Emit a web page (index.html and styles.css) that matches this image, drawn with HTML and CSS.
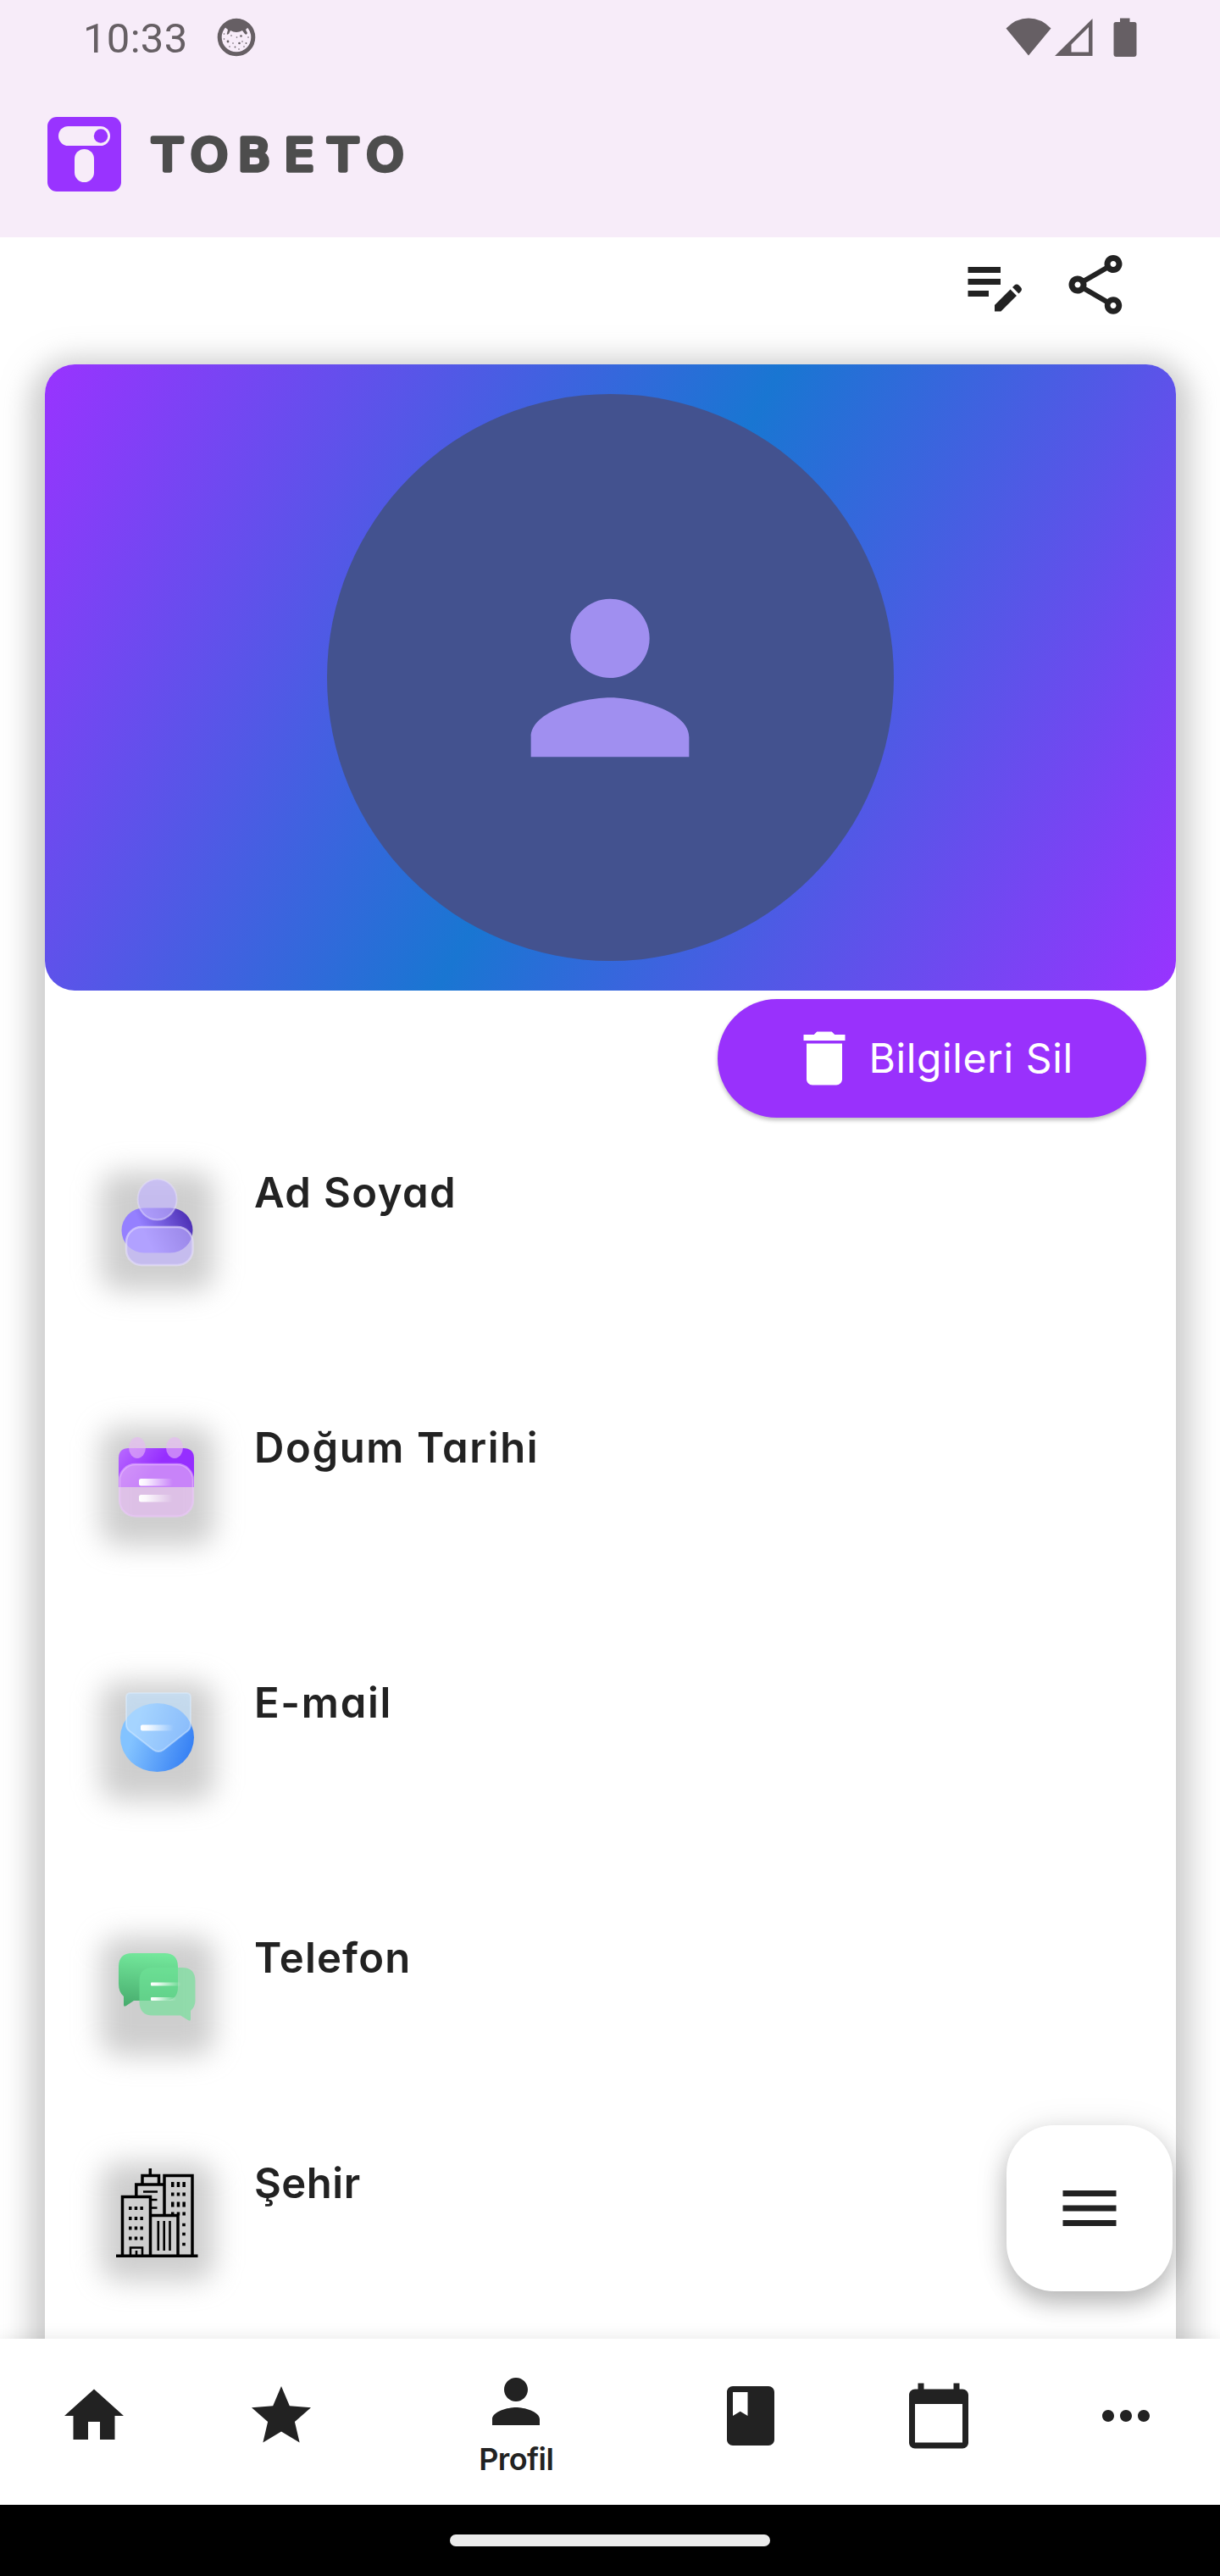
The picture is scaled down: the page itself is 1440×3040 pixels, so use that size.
FILE: index.html
```html
<!DOCTYPE html>
<html lang="tr">
<head>
<meta charset="utf-8">
<title>Tobeto - Profil</title>
<link rel="stylesheet" href="styles.css">
</head>
<body>
<div class="screen">
  <header class="header">
    <div class="status">
      <span class="clock">10:33</span>
      <svg class="face" width="46" height="46" viewBox="0 0 46 46">
        <circle cx="23" cy="23" r="19.8" fill="none" stroke="#665f64" stroke-width="5"/>
        <path fill="#665f64" d="M8 10Q15 1 23 1T38 10L34 14L36 18Q35 21 33 19L30 15Q23 19 16 15L14 19Q11 21 12 18L13 14Z"/>
        <g fill="#665f64"><circle cx="13" cy="28" r="1.4"/><circle cx="26.500" cy="30" r="1.3"/><circle cx="28.500" cy="21.500" r="1.3"/><circle cx="17" cy="21" r=".8"/><circle cx="23.500" cy="23" r=".8"/><circle cx="19" cy="30" r=".8"/><circle cx="30" cy="28" r=".8"/><circle cx="34.500" cy="30" r=".9"/><circle cx="8.500" cy="25" r=".8"/><circle cx="8.500" cy="19" r=".8"/><circle cx="37" cy="23" r=".8"/><circle cx="15" cy="34" r=".8"/><circle cx="21.500" cy="34.500" r=".9"/><circle cx="26" cy="37" r=".8"/><circle cx="32" cy="34" r=".8"/></g>
      </svg>
      <svg class="signals" width="156" height="48" viewBox="0 0 156 48" fill="#665f64">
        <path d="M.5 13.500Q12 1.500 27 1.500T53.500 13.500L27 45.500Z"/>
        <path fill-rule="evenodd" d="M58 46L102.500 2V46ZM77.500 41.500H98V12L77.500 32.500Z"/>
        <path d="M135 1.500h11.500v4.500H152q2.500 0 2.500 2.500V44q0 3-3 3H130.500q-3 0-3-3V8.500Q127.500 6 130 6h5z"/>
      </svg>
    </div>
    <svg class="brand" width="424" height="90" viewBox="0 0 424 90">
      <rect y="1" width="87" height="88" rx="11" fill="#9933ff"/>
      <rect x="13" y="12" width="61" height="23" rx="11.500" fill="#f7ecf9"/>
      <circle cx="63" cy="23.500" r="8.200" fill="#9933ff"/>
      <rect x="32" y="39" width="23" height="39" rx="11.500" fill="#f7ecf9"/>
      <text class="wordmark" transform="scale(1.06 1)" x="133.500 180.200 230.200 280.200 329.200 375.900" y="63.700">TOBETO</text>
    </svg>
  </header>

  <main class="content">
    <div class="actions">
      <svg class="icon" viewBox="0 0 24 24"><path d="M3 10h11v2H3v-2zm0-2h11V6H3v2zm0 8h7v-2H3v2zm15.010-3.130.710-.710c.390-.390 1.020-.390 1.410 0l.710.710c.390.390.390 1.020 0 1.410l-.710.710-2.120-2.120zm-.710.710-5.300 5.300V21h2.120l5.300-5.300-2.120-2.120z"/></svg>
      <svg class="icon" viewBox="0 0 24 24"><path d="M18 16.080c-.760 0-1.440.300-1.960.770L8.910 12.700c.050-.230.090-.460.090-.700s-.040-.470-.090-.700l7.050-4.110c.540.500 1.250.810 2.040.810 1.660 0 3-1.340 3-3s-1.340-3-3-3-3 1.340-3 3c0 .240.040.470.090.700L8.040 9.810C7.500 9.310 6.790 9 6 9c-1.660 0-3 1.340-3 3s1.340 3 3 3c.790 0 1.500-.310 2.040-.810l7.120 4.160c-.050.210-.080.430-.080.650 0 1.610 1.310 2.920 2.920 2.920s2.920-1.310 2.920-2.920c0-1.610-1.310-2.920-2.920-2.920zM18 4c.550 0 1 .450 1 1s-.450 1-1 1-1-.450-1-1 .450-1 1-1zM6 13c-.550 0-1-.450-1-1s.450-1 1-1 1 .450 1 1-.450 1-1 1zm12 7.020c-.550 0-1-.450-1-1s.450-1 1-1 1 .450 1 1-.450 1-1 1z"/></svg>
    </div>

    <section class="card">
      <div class="banner">
        <div class="avatar">
          <svg width="280" height="280" viewBox="0 0 24 24" fill="#a08ff0"><path d="M12 12c2.210 0 4-1.790 4-4s-1.790-4-4-4-4 1.790-4 4 1.790 4 4 4zm0 2c-2.670 0-8 1.340-8 4v2h16v-2c0-2.660-5.330-4-8-4z"/></svg>
        </div>
      </div>
      <div class="toolbar">
        <button class="delete">
          <svg class="icon" viewBox="0 0 24 24"><path d="M6 19c0 1.100.900 2 2 2h8c1.100 0 2-.900 2-2V7H6v12zM19 4h-3.500l-1-1h-5l-1 1H5v2h14V4z"/></svg>
          <span class="delete-label">Bilgileri Sil</span>
        </button>
      </div>

      <ul class="fields">
        <li class="field">
          <span class="thumb"><svg viewBox="0 0 99 105">
            <defs>
              <linearGradient id="body" x1="0" y1=".4" x2="1" y2=".1"><stop offset=".25" stop-color="#9580ff"/><stop offset="1" stop-color="#4527ad"/></linearGradient>
              <linearGradient id="fade"><stop offset="0" stop-color="#fff"/><stop offset=".2" stop-color="#fff" stop-opacity=".9"/><stop offset="1" stop-color="#fff" stop-opacity="0"/></linearGradient>
            </defs>
            <rect x="7.500" y="35.500" width="84" height="53" rx="26.500" fill="url(#body)"/>
            <ellipse cx="49.600" cy="25.500" rx="23" ry="24" fill="#c0b2ff" fill-opacity=".65" stroke="#e6e0fc" stroke-opacity=".5" stroke-width="2"/>
            <rect x="13" y="58" width="78.500" height="45" rx="18" fill="#c0b2ff" fill-opacity=".65" stroke="#e6e0fc" stroke-opacity=".6" stroke-width="2.500"/>
          </svg></span>
          <span class="label name">Ad Soyad</span>
        </li>
        <li class="field">
          <span class="thumb"><svg viewBox="0 0 99 105">
            <defs><linearGradient id="cal" x1="0" y1="0" x2="1" y2=".4"><stop offset="0" stop-color="#b96bff"/><stop offset=".6" stop-color="#962eff"/><stop offset="1" stop-color="#962eff"/></linearGradient></defs>
            <path d="M4 64V30Q4 18 16 18H80Q93 18 93 30V64Z" fill="url(#cal)"/>
            <g fill="#e7b8f5" fill-opacity=".62"><ellipse cx="26" cy="17.500" rx="10" ry="12.500"/><ellipse cx="70" cy="17.500" rx="10" ry="12.500"/></g>
            <rect x="5" y="37" width="87" height="61.500" rx="19" fill="#e7b8f5" fill-opacity=".62" stroke="#f0c8ff" stroke-opacity=".5" stroke-width="2.500"/>
            <rect x="28" y="54" width="40" height="8.500" rx="2.500" fill="url(#fade)"/>
            <rect x="28" y="73" width="40" height="8.500" rx="2.500" fill="url(#fade)"/>
          </svg></span>
          <span class="label birth">Doğum Tarihi</span>
        </li>
        <li class="field">
          <span class="thumb"><svg viewBox="0 0 99 105">
            <defs><linearGradient id="mail" x1="0" y1=".3" x2="1" y2=".6"><stop offset=".2" stop-color="#83c3ff"/><stop offset="1" stop-color="#3680f4"/></linearGradient></defs>
            <ellipse cx="49.500" cy="58.500" rx="43.500" ry="40.500" fill="url(#mail)"/>
            <path d="M13 11Q13 6 18 6H84Q89 6 89 11V43Q89 48 85 51L57 73Q51 77 45 73L17 51Q13 48 13 43Z" fill="#bde0ff" fill-opacity=".6" stroke="#dceeff" stroke-opacity=".5" stroke-width="2"/>
            <rect x="30" y="43.500" width="39" height="7" rx="2" fill="url(#fade)"/>
          </svg></span>
          <span class="label email">E-mail</span>
        </li>
        <li class="field short">
          <span class="thumb"><svg viewBox="0 0 99 105">
            <defs><linearGradient id="chat" x1=".4" y1="0" x2=".3" y2="1"><stop offset="0" stop-color="#73e79b"/><stop offset="1" stop-color="#48ad6e"/></linearGradient></defs>
            <path d="M20 12H58Q74 12 74 28V52Q74 68 58 68H22L13 74Q10 76 10 73V63Q4 58 4 48V28Q4 12 20 12Z" fill="url(#chat)"/>
            <path d="M44 29H79Q94.500 29 94.500 45V68Q94.500 75 89 80V90Q89 93 86 91L77 85.500H44Q28.500 85.500 28.500 69V45Q28.500 29 44 29Z" fill="#6ee296" fill-opacity=".64"/>
            <rect x="42" y="46.500" width="36" height="4" rx="1" fill="url(#fade)"/>
            <rect x="42" y="64" width="30" height="4" rx="1" fill="url(#fade)"/>
          </svg></span>
          <span class="label phone">Telefon</span>
        </li>
        <li class="field">
          <span class="thumb"><svg viewBox="0 0 99 105" fill="none" stroke="#000" stroke-width="3.500">
            <path d="M1 103.300H97.500M8.500 103V33.500H41.500V103M24.800 33V19H57M32 18V8.500H51.500V18M41.300 0V8M58 55V8.500H91V103M43 55.500H74V103"/>
            <path stroke-width="2.600" d="M33 27.500H50M43 37H49.500M43 46.500H49.500M50.800 62V97M57.700 62V97M64.500 62V97M18 103V93.500H32V103M25 97V103"/>
            <g stroke-width="4" stroke-dasharray="3.500 3.200"><path d="M16 47H36M16 59H36M16 70.500H36M16 82.500H36"/></g>
            <g stroke-width="6" stroke-dasharray="3.500 3.200"><path d="M66 19H84M66 42.500H84"/></g>
            <g stroke-width="4" stroke-dasharray="3.500 3.200"><path d="M66 30.500H84M66 53.500H84"/></g>
            <path d="M79.200 66.500h3.600M79.200 77.500h3.600M79.200 89.500h3.600"/>
          </svg></span>
          <span class="label city">Şehir</span>
        </li>
      </ul>
    </section>

    <button class="fab" aria-label="Menü"><svg class="icon" viewBox="0 0 24 24"><path d="M3 18h18v-2H3v2zm0-5h18v-2H3v2zm0-7v2h18V6H3z"/></svg></button>
  </main>

  <nav class="nav">
    <a class="tab"><svg class="icon" viewBox="0 0 24 24"><path d="M10 20v-6h4v6h5v-8h3L12 3 2 12h3v8z"/></svg></a>
    <a class="tab"><svg class="icon" viewBox="0 0 24 24"><path d="M12 17.270L18.180 21l-1.640-7.030L22 9.240l-7.190-.610L12 2 9.190 8.630 2 9.240l5.460 4.730L5.820 21z"/></svg></a>
    <a class="tab active"><svg class="icon" viewBox="0 0 24 24"><path d="M12 12c2.210 0 4-1.790 4-4s-1.790-4-4-4-4 1.790-4 4 1.790 4 4 4zm0 2c-2.670 0-8 1.340-8 4v2h16v-2c0-2.660-5.330-4-8-4z"/></svg><span class="tab-label">Profil</span></a>
    <a class="tab"><svg class="icon" viewBox="0 0 24 24"><path d="M18 2H6c-1.100 0-2 .900-2 2v16c0 1.100.900 2 2 2h12c1.100 0 2-.900 2-2V4c0-1.100-.900-2-2-2zM6 4h5v8l-2.500-1.500L6 12V4z"/></svg></a>
    <a class="tab"><svg class="icon" viewBox="0 0 24 24"><path d="M20 3h-1V1h-2v2H7V1H5v2H4c-1.100 0-2 .900-2 2v16c0 1.100.900 2 2 2h16c1.100 0 2-.900 2-2V5c0-1.100-.900-2-2-2zm0 18H4V8h16v13z"/></svg></a>
    <a class="tab"><svg class="icon" viewBox="0 0 24 24"><path d="M6 10c-1.100 0-2 .900-2 2s.900 2 2 2 2-.900 2-2-.900-2-2-2zm12 0c-1.100 0-2 .900-2 2s.900 2 2 2 2-.900 2-2-.900-2-2-2zm-6 0c-1.100 0-2 .900-2 2s.900 2 2 2 2-.900 2-2-.900-2-2-2z"/></svg></a>
  </nav>
  <div class="system-bar"><div class="handle"></div></div>
</div>
</body>
</html>
```
FILE: styles.css
```css
* { box-sizing: border-box; }
body { margin: 0; font-family: Inter, "Liberation Sans", sans-serif; color: #222; background: #fff; }
button { border: 0; padding: 0; font: inherit; }
svg { display: block; flex: none; }

.screen { width: 1440px; height: 3040px; display: flex; flex-direction: column; overflow: hidden; }
.icon { width: 84px; height: 84px; fill: #222; }

.header { flex: none; height: 280px; background: #f7ecf9; }
.status { display: flex; align-items: flex-start; padding: 20px 97px 0 98px; height: 137px; }
.clock { font: 400 49px/58px Roboto, sans-serif; letter-spacing: .3px; color: #665f64; width: 158px; margin-top: -3px; }
.face { margin-top: 1px; }
.signals { margin-left: auto; }
.brand { margin-left: 56px; }
.wordmark { font: 400 52px "DejaVu Sans", sans-serif; fill: #4d4d4d; stroke: #4d4d4d; stroke-width: 5.5px; stroke-linejoin: round; text-anchor: middle; }

.content { flex: 1; min-height: 0; position: relative; overflow: hidden; display: flex; flex-direction: column; }
.actions { flex: none; height: 150px; padding: 14px 105px 0 0; display: flex; justify-content: flex-end; gap: 35px; }

.card { flex: none; width: 1335px; height: 2600px; margin: 0 auto; border-radius: 35px; background: #fff; box-shadow: 0 10.5px 32px 17.5px rgba(158, 158, 158, .5); }
.banner { height: 739px; border-radius: 35px; display: flex; align-items: center; justify-content: center; background: linear-gradient(118.97deg, #9933ff, #1976d2, #9933ff); }
.avatar { width: 669px; height: 669px; border-radius: 50%; background: #43528f; display: flex; align-items: center; justify-content: center; }

.toolbar { display: flex; justify-content: flex-end; padding: 10px 35px 0 0; }
.delete { display: flex; align-items: center; width: 506px; height: 140px; padding-left: 84px; border-radius: 70px; background: #9931fc; color: #fff; box-shadow: 0 3px 5px rgba(0, 0, 0, .26); }
.delete .icon { fill: #fff; }
.delete-label { font-size: 48px; letter-spacing: .6px; line-height: 60px; margin-left: 11px; white-space: nowrap; }

.fields { list-style: none; margin: 59px 0 0; padding: 0 0 0 83.5px; }
.field { display: flex; align-items: flex-start; gap: 65px; height: 301px; }
.field.short { height: 266px; }
.thumb { position: relative; isolation: isolate; width: 99px; height: 105px; margin-top: 12px; }
/* soft shadow that stays visible behind the translucent artwork */
.thumb::before { content: ""; position: absolute; z-index: -1; inset: -7px -17.5px -28px; border-radius: 22px; background: rgba(158, 158, 158, .5); filter: blur(16px); }
.label { font-size: 49px; font-weight: 600; line-height: 60px; white-space: nowrap; font-feature-settings: "cv11"; }
.name { letter-spacing: 1.4px; }
.birth { letter-spacing: 1.6px; }
.email { letter-spacing: 1.7px; }
.phone { letter-spacing: 1.2px; }
.city { letter-spacing: .5px; }

.fab { position: absolute; right: 56px; bottom: 56px; width: 196px; height: 196px; border-radius: 56px; background: #fff; display: flex; align-items: center; justify-content: center; box-shadow: 0 14px 28px rgba(0, 0, 0, .24), 0 3px 40px rgba(0, 0, 0, .1); }

.nav { flex: none; height: 196px; display: grid; grid-template-columns: 2fr 2fr 3fr 2fr 2fr 2fr; background: #fff; position: relative; box-shadow: 0 0 20px rgba(0, 0, 0, .1); }
.tab { display: flex; flex-direction: column; align-items: center; padding-top: 49px; }
.tab.active { padding-top: 32px; }
.tab-label { font-size: 36px; font-weight: 600; letter-spacing: -.6px; line-height: 44px; margin-top: 4px; }

.system-bar { flex: none; height: 84px; background: #000; padding-top: 35px; position: relative; }
.handle { width: 378px; height: 14px; margin: 0 auto; border-radius: 7px; background: #ebebeb; }
```
